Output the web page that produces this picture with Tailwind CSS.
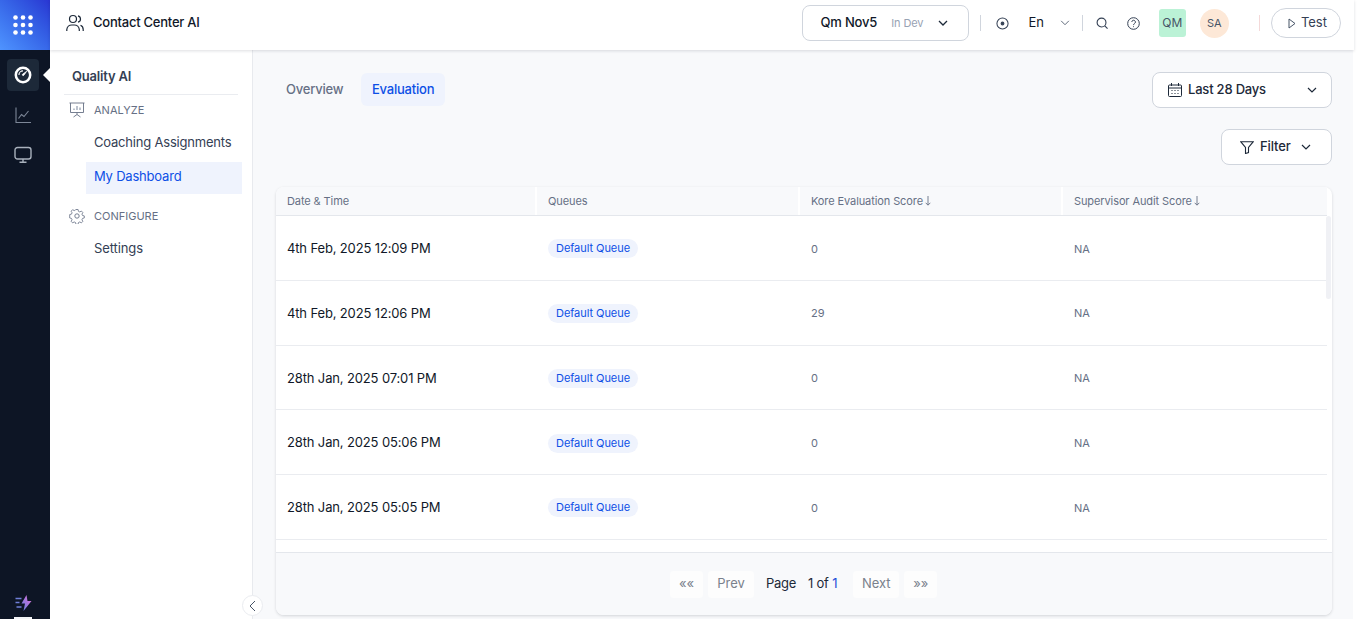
<!DOCTYPE html>
<html lang="en">
<head>
    <meta charset="UTF-8">
    <title>Contact Center AI</title>
    <script src="https://cdn.jsdelivr.net/npm/@tailwindcss/browser@4"></script>
</head>
<body class="flex h-[619px] w-[1357px] overflow-hidden bg-white font-['Inter',sans-serif] text-[#101828]">
    <!-- icon rail -->
    <aside class="relative flex h-full w-[50px] shrink-0 flex-col items-start bg-[#0d1525]">
        <div class="grid h-[50px] w-[50px] place-items-center bg-gradient-to-tr from-[#4f94ff] to-[#2a35d2] pr-[4px]">
            <svg width="20" height="20" viewBox="0 0 20 20" fill="#fff"><circle cx="2.500" cy="2.500" r="2.300"/><circle cx="10" cy="2.500" r="2.300"/><circle cx="17.500" cy="2.500" r="2.300"/><circle cx="2.500" cy="10" r="2.300"/><circle cx="10" cy="10" r="2.300"/><circle cx="17.500" cy="10" r="2.300"/><circle cx="2.500" cy="17.500" r="2.300"/><circle cx="10" cy="17.500" r="2.300"/><circle cx="17.500" cy="17.500" r="2.300"/></svg>
        </div>
        <div class="ml-[7px] mt-[9px] grid h-8 w-8 place-items-center rounded bg-[#1d2939]">
            <svg width="18" height="18" viewBox="0 0 20 20" fill="none" stroke="#fff"><circle cx="10" cy="10" r="8" stroke-width="2.800"/><path d="M5.500 10a4.500 4.500 0 0 1 4.500-4.500" stroke-width="1.300"/><path d="M14 6l-3.400 4.600a1 1 0 0 1-1.300-1.200z" fill="#fff" stroke-width="1"/></svg>
        </div>
        <div class="absolute left-[43px] top-[68px] h-0 w-0 border-y-[7px] border-r-[7px] border-y-transparent border-r-white"></div>
        <svg class="ml-[15px] mt-[16px]" width="16" height="17" viewBox="0 0 16 17" fill="none" stroke="#7d8798" stroke-width="1.100"><path d="M1 0.500v15h15"/><path d="M3.500 11.500l3-4 2.500 2 4.500-5.500"/></svg>
        <svg class="ml-[14px] mt-[22px]" width="18" height="18" viewBox="0 0 18 18" fill="none" stroke="#a9b1bd" stroke-width="1.400"><rect x="1" y="1.500" width="16" height="11.500" rx="2.500"/><path d="M9 13v3M5.500 16.300h7"/></svg>
        <svg class="absolute left-[15px] top-[595px]" width="17" height="16" viewBox="0 0 17 16"><defs><linearGradient id="bolt" x1="0" y1="1" x2="1" y2="0"><stop offset="0" stop-color="#5b7fe0"/><stop offset="1" stop-color="#e86fd8"/></linearGradient></defs><path d="M11.500 0L6.500 8.500h3.500L8.500 16 16.500 6h-4z" fill="url(#bolt)"/><path d="M0.500 3.500h6M0.500 7.500h4M1.500 12h5" stroke="#6f7fd8" stroke-width="1.500"/></svg>
        <div class="absolute left-[14px] top-[617px] h-[2px] w-[18px] bg-[#f2f4f7]"></div>
    </aside>

    <div class="flex min-w-0 flex-1 flex-col">
        <!-- top bar -->
        <header class="relative z-10 flex h-[50px] w-[1304px] shrink-0 items-center bg-white pb-[4px] pl-[16px] shadow-[0_1px_3px_rgba(16,24,40,0.14)]">
            <svg width="18" height="18" viewBox="0 0 18 18" fill="none" stroke="#1d2939" stroke-width="1.200"><circle cx="7" cy="5" r="3.500"/><path d="M12 1.800a3.300 3.300 0 0 1 0 6.400M0.800 17v-1.500a5 5 0 0 1 5-4.500h2.500a5 5 0 0 1 5 4.500V17M14.500 11.300a4.500 4.500 0 0 1 2.700 4.200V17"/></svg>
            <span class="ml-[9px] text-[13px] font-medium tracking-[-0.24px]">Contact Center AI</span>

            <div class="ml-[602px] flex h-[36px] w-[167px] items-center rounded-lg border border-[#d0d5dd] pl-[18px]">
                <span class="text-[13px] font-medium tracking-[-0.2px]">Qm Nov5</span>
                <span class="ml-[14px] text-[11px] tracking-[-0.1px] text-[#98a2b3]">In Dev</span>
                <svg class="ml-[15px]" width="10" height="7" viewBox="0 0 10 7" fill="none" stroke="#1d2939" stroke-width="1.300"><path d="M1 1l4 4 4-4"/></svg>
            </div>
            <div class="ml-[11px] h-[16px] w-px bg-[#d0d5dd]"></div>
            <svg class="ml-[15px]" width="13" height="13" viewBox="0 0 14 14" fill="none" stroke="#344054" stroke-width="1.100"><circle cx="7" cy="7" r="6"/><circle cx="7" cy="7" r="1.500" fill="#344054"/></svg>
            <span class="ml-[20px] text-[13px] tracking-[-0.1px]">En</span>
            <svg class="ml-[16px]" width="10" height="6" viewBox="0 0 11 7" fill="none" stroke="#475467" stroke-width="1"><path d="M1 1l4.500 4.500L10 1"/></svg>
            <div class="ml-[12px] h-[16px] w-px bg-[#d0d5dd]"></div>
            <svg class="ml-[13px]" width="12" height="12" viewBox="0 0 13 13" fill="none" stroke="#344054" stroke-width="1.200"><circle cx="6" cy="6" r="4.800"/><path d="M9.500 9.500l3 3"/></svg>
            <svg class="ml-[19px]" width="13" height="13" viewBox="0 0 13 13" fill="none" stroke="#344054" stroke-width="1"><circle cx="6.500" cy="6.500" r="5.800"/><path d="M4.800 5a1.800 1.800 0 1 1 2.700 1.600c-.7.400-1 .8-1 1.500M6.500 9.300v.8"/></svg>
            <div class="ml-[19px] grid h-[28px] w-[27px] place-items-center rounded-[3px] bg-[#bbf2d6] text-[12px] text-[#475467]">QM</div>
            <div class="ml-[14px] grid h-[29px] w-[29px] place-items-center rounded-full bg-[#fde8d7] text-[11px] text-[#475467]">SA</div>
            <div class="ml-[30px] h-[16px] w-px bg-[#f4d9d9]"></div>
            <div class="ml-[11px] flex h-[30px] w-[70px] items-center rounded-full border border-[#d0d5dd] pl-[16px]">
                <svg width="8" height="11" viewBox="0 0 8 11" fill="none" stroke="#475467" stroke-width="1"><path d="M1 1l6 4.500-6 4.500z"/></svg>
                <span class="ml-[5px] text-[13px] text-[#344054]">Test</span>
            </div>
        </header>

        <div class="flex min-h-0 flex-1">
            <!-- side menu -->
            <nav class="relative h-full w-[203px] shrink-0 border-r border-[#e8eaee] bg-white">
                <div class="mx-[14px] h-[45px] border-b border-[#eaecf0] pl-[8px] pt-[18px] text-[13px] font-semibold leading-[17px] tracking-[-0.2px] text-[#344054]">Quality AI</div>
                <div class="mt-[6px] flex h-[18px] items-center pl-[19px]">
                    <svg width="16" height="16" viewBox="0 0 16 16" fill="none" stroke="#667085" stroke-width="0.900"><path d="M0.500 1h15M1.500 1v9.500h13V1M8 10.500v2M4.500 15l3.500-2.500 3.500 2.500"/><path d="M5 8V6.500M8 8V4M11 8V5.500" stroke-width="1.300" stroke="#98a2b3"/></svg>
                    <span class="ml-[9px] text-[11px] text-[#667085]">ANALYZE</span>
                </div>
                <div class="mt-[8px] flex h-[32px] items-center pl-[44px] text-[13px] tracking-[-0.2px] text-[#344054]">Coaching Assignments</div>
                <div class="ml-[36px] mt-[3px] flex h-[32px] w-[156px] items-center bg-[#eff3fd] pb-[2px] pl-[8px] text-[13px] tracking-[-0.2px] text-[#0d4fe6]">My Dashboard</div>
                <div class="mt-[13px] flex h-[18px] items-center pl-[19px]">
                    <svg width="16" height="16" viewBox="0 0 16 16" fill="none" stroke="#667085" stroke-width="0.900"><circle cx="8" cy="8" r="2.200"/><path d="M6.800 0.800h2.400l.4 2 1.500.7 1.800-1 1.600 1.700-1 1.700.6 1.500 2 .5v2.300l-2 .5-.6 1.500 1 1.700-1.600 1.700-1.800-1-1.500.7-.4 2H6.800l-.4-2-1.500-.7-1.800 1-1.600-1.700 1-1.700-.6-1.500-2-.5V6.400l2-.5.600-1.500-1-1.700 1.600-1.700 1.800 1 1.500-.7z" transform="translate(0.800 0.800) scale(0.900)"/></svg>
                    <span class="ml-[9px] text-[11px] text-[#667085]">CONFIGURE</span>
                </div>
                <div class="mt-[8px] flex h-[32px] items-center pl-[44px] text-[13px] tracking-[-0.1px] text-[#344054]">Settings</div>
                <button class="absolute left-[192px] top-[545px] z-10 grid h-[21px] w-[21px] place-items-center rounded-full border border-[#eaecf0] bg-white">
                    <svg width="7" height="12" viewBox="0 0 7 12" fill="none" stroke="#475467" stroke-width="1"><path d="M6 1L1 6l5 5"/></svg>
                </button>
            </nav>

            <!-- main -->
            <main class="h-full w-[1100px] shrink-0 bg-[#f8f9fb] pl-[23px]">
                <div class="flex h-[79px] items-start pt-[23px]">
                    <div class="flex h-[33px] items-center px-[10px] text-[13px] font-medium tracking-[-0.2px] text-[#667085]">Overview</div>
                    <div class="ml-[8px] flex h-[33px] items-center rounded-md bg-[#eff3fd] px-[10.500px] text-[13px] font-medium tracking-[-0.2px] text-[#0d4fe6]">Evaluation</div>
                    <div class="ml-auto mr-[21px] -mt-[1px] flex h-[36px] w-[180px] items-center rounded-lg border border-[#d0d5dd] bg-white pl-[15px]">
                        <svg width="14" height="14" viewBox="0 0 14 14" fill="none" stroke="#1d2939" stroke-width="1"><rect x="0.500" y="2" width="13" height="11.500" rx="1"/><path d="M3.500 0v3M10.500 0v3M0.500 5h13"/><path d="M3.500 7.500h1M6.500 7.500h1M9.500 7.500h1M3.500 10.500h1M6.500 10.500h1M9.500 10.500h1" stroke-width="1.100"/></svg>
                        <span class="ml-[6px] text-[13px] font-medium tracking-[-0.2px] text-[#1d2939]">Last 28 Days</span>
                        <svg class="ml-[41px]" width="10" height="6" viewBox="0 0 10 6" fill="none" stroke="#1d2939" stroke-width="1.200"><path d="M1 1l4 4 4-4"/></svg>
                    </div>
                </div>
                <div class="mr-[21px] flex justify-end">
                    <div class="flex h-[36px] w-[111px] items-center rounded-lg border border-[#d0d5dd] bg-white pl-[18px]">
                        <svg width="14" height="13" viewBox="0 0 14 13" fill="none" stroke="#1d2939" stroke-width="1.100"><path d="M0.700 0.700h12.600L8.500 6.500v5l-3 1v-6z"/></svg>
                        <span class="ml-[6px] text-[13px] font-medium tracking-[-0.1px] text-[#1d2939]">Filter</span>
                        <svg class="ml-[10px]" width="10" height="6" viewBox="0 0 10 6" fill="none" stroke="#1d2939" stroke-width="1.200"><path d="M1 1l4 4 4-4"/></svg>
                    </div>
                </div>

                <!-- table card -->
                <section class="relative mt-[22px] h-[428px] w-[1056px] overflow-hidden rounded-lg bg-white shadow-[0_1px_3px_rgba(16,24,40,0.16)]">
                    <div class="grid h-[29px] w-[1051px] grid-cols-[261px_263px_263px_264px] border-b border-[#e4e7ec] bg-[#f8f9fb] text-[11px] tracking-[-0.1px] text-[#667085]">
                        <div class="flex items-center border-r-2 border-white pl-[11px]">Date &amp; Time</div>
                        <div class="flex items-center border-r-2 border-white pl-[11px]">Queues</div>
                        <div class="flex items-center border-r-2 border-white pl-[11px]">Kore Evaluation Score<svg class="ml-[2px]" width="6" height="10" viewBox="0 0 6 10" fill="none" stroke="#667085" stroke-width="0.900"><path d="M3 0v9M0.700 6.800L3 9.200l2.300-2.400"/></svg></div>
                        <div class="flex items-center pl-[11px]">Supervisor Audit Score<svg class="ml-[2px]" width="6" height="10" viewBox="0 0 6 10" fill="none" stroke="#667085" stroke-width="0.900"><path d="M3 0v9M0.700 6.800L3 9.200l2.300-2.400"/></svg></div>
                    </div>
                    <div class="absolute right-[1px] top-[29px] h-[83px] w-[5px] rounded-sm bg-[#f0f1f5]"></div>
                    <div class="h-[336px] overflow-hidden">
                        <div class="grid h-[64.75px] w-[1051px] grid-cols-[261px_263px_263px_264px] items-center border-b border-[#eaecf0] pt-[1.750px] text-[11px] tracking-[-0.05px] text-[#667085]">
                            <div class="pl-[11px] text-[13px] tracking-[-0.14px] text-[#101828]">4th Feb, 2025 12:09 PM</div>
                            <div class="pl-[11px]"><span class="inline-block rounded-full bg-[#eff3fd] px-[8px] py-[3px] leading-[13px] text-[#0d4fe6]">Default Queue</span></div>
                            <div class="pl-[11px]">0</div>
                            <div class="pl-[11px]">NA</div>
                        </div>
                        <div class="grid h-[64.75px] w-[1051px] grid-cols-[261px_263px_263px_264px] items-center border-b border-[#eaecf0] pt-[1.750px] text-[11px] tracking-[-0.05px] text-[#667085]">
                            <div class="pl-[11px] text-[13px] tracking-[-0.14px] text-[#101828]">4th Feb, 2025 12:06 PM</div>
                            <div class="pl-[11px]"><span class="inline-block rounded-full bg-[#eff3fd] px-[8px] py-[3px] leading-[13px] text-[#0d4fe6]">Default Queue</span></div>
                            <div class="pl-[11px]">29</div>
                            <div class="pl-[11px]">NA</div>
                        </div>
                        <div class="grid h-[64.75px] w-[1051px] grid-cols-[261px_263px_263px_264px] items-center border-b border-[#eaecf0] pt-[1.750px] text-[11px] tracking-[-0.05px] text-[#667085]">
                            <div class="pl-[11px] text-[13px] tracking-[-0.14px] text-[#101828]">28th Jan, 2025 07:01 PM</div>
                            <div class="pl-[11px]"><span class="inline-block rounded-full bg-[#eff3fd] px-[8px] py-[3px] leading-[13px] text-[#0d4fe6]">Default Queue</span></div>
                            <div class="pl-[11px]">0</div>
                            <div class="pl-[11px]">NA</div>
                        </div>
                        <div class="grid h-[64.75px] w-[1051px] grid-cols-[261px_263px_263px_264px] items-center border-b border-[#eaecf0] pt-[1.750px] text-[11px] tracking-[-0.05px] text-[#667085]">
                            <div class="pl-[11px] text-[13px] tracking-[-0.14px] text-[#101828]">28th Jan, 2025 05:06 PM</div>
                            <div class="pl-[11px]"><span class="inline-block rounded-full bg-[#eff3fd] px-[8px] py-[3px] leading-[13px] text-[#0d4fe6]">Default Queue</span></div>
                            <div class="pl-[11px]">0</div>
                            <div class="pl-[11px]">NA</div>
                        </div>
                        <div class="grid h-[64.75px] w-[1051px] grid-cols-[261px_263px_263px_264px] items-center border-b border-[#eaecf0] pt-[1.750px] text-[11px] tracking-[-0.05px] text-[#667085]">
                            <div class="pl-[11px] text-[13px] tracking-[-0.14px] text-[#101828]">28th Jan, 2025 05:05 PM</div>
                            <div class="pl-[11px]"><span class="inline-block rounded-full bg-[#eff3fd] px-[8px] py-[3px] leading-[13px] text-[#0d4fe6]">Default Queue</span></div>
                            <div class="pl-[11px]">0</div>
                            <div class="pl-[11px]">NA</div>
                        </div>
                    </div>
                    <div class="flex h-[63px] items-center justify-start border-t border-[#e4e7ec] bg-[#f8f9fb] pl-[394px] text-[13px]">
                        <span class="grid h-[27px] w-[33px] place-items-center rounded bg-[#fdfdfd] text-[#7a818c]">««</span>
                        <span class="ml-[5px] grid h-[27px] w-[46px] place-items-center rounded bg-[#fdfdfd] text-[#7a818c]">Prev</span>
                        <span class="ml-[12px] tracking-[-0.3px] text-[#1d2939]">Page</span>
                        <span class="ml-[12px] tracking-[-0.2px] text-[#1d2939]">1 of <span class="text-[#1d4ed8]">1</span></span>
                        <span class="ml-[16px] grid h-[27px] w-[46px] place-items-center rounded bg-[#fdfdfd] text-[#7a818c]">Next</span>
                        <span class="ml-[5px] grid h-[27px] w-[33px] place-items-center rounded bg-[#fdfdfd] text-[#7a818c]">»»</span>
                    </div>
                </section>
            </main>
        </div>
    </div>
</body>
</html>
